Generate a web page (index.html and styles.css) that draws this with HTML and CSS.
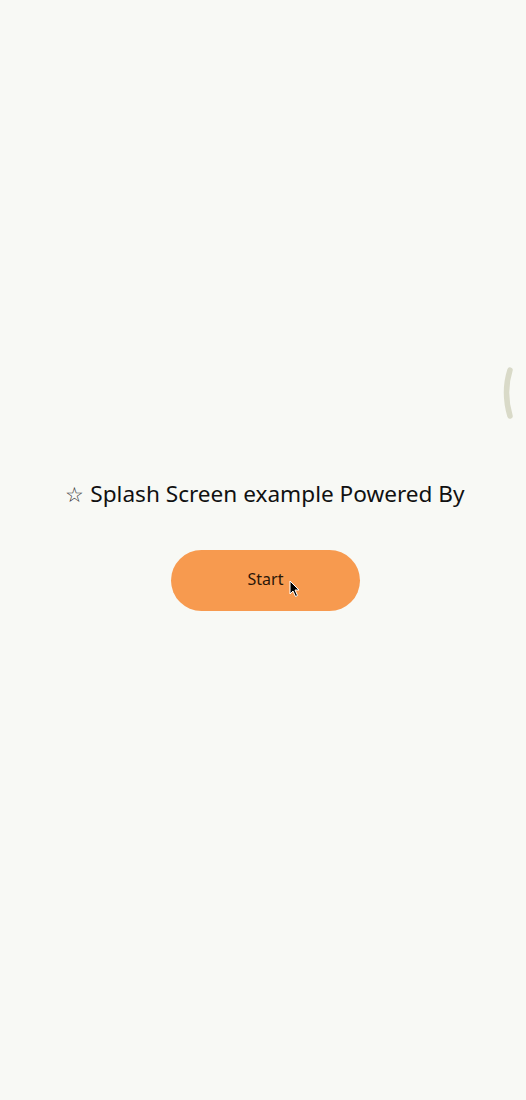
FILE: index.html
```html
<!DOCTYPE html>
<html>
<head>
<meta charset="utf-8">
<link rel="stylesheet" href="styles.css">
</head>
<body>
<div class="screen">
  <svg class="arc" width="20" height="56" viewBox="0 0 20 56"><path d="M10 4 Q3 26 10 50" fill="none" stroke="#d9dac8" stroke-width="5.5" stroke-linecap="round"/></svg>
  <main class="content">
    <h1 class="title"><span class="star">☆</span> Splash Screen example Powered By</h1>
    <button class="start">Start<svg class="cursor" width="12" height="18" viewBox="0 0 12 18"><path d="M1 1 L1 14 L4 11 L6.5 16.5 L8.5 15.5 L6 10 L10 10 Z" fill="#000" stroke="#fff" stroke-width="1"/></svg></button>
  </main>
</div>
</body>
</html>
```
FILE: styles.css
```css
html, body {
  margin: 0;
  padding: 0;
}
body {
  background: #f8f9f5;
  font-family: "Noto Sans", "Open Sans", sans-serif;
}
.screen {
  position: relative;
  width: 526px;
  height: 1100px;
  overflow: hidden;
}
.arc {
  position: absolute;
  left: 500px;
  top: 366px;
}
.content {
  display: flex;
  flex-direction: column;
  align-items: center;
  padding-top: 475px;
  padding-left: 4px;
}
.title {
  margin: 0;
  font-weight: 400;
  font-size: 22.6px;
  line-height: 38px;
  color: #111;
  letter-spacing: 0;
}
.star {
  font-size: 21px;
  color: #333;
}
.start {
  position: relative;
  margin-top: 37px;
  margin-left: 1px;
  width: 189px;
  height: 61px;
  border: none;
  border-radius: 31px;
  background: #f79a4f;
  color: #2a1608;
  font-family: "Noto Sans", sans-serif;
  font-size: 16px;
  padding: 0 0 4px 0;
}
.cursor {
  position: absolute;
  left: 118px;
  top: 30px;
}
```
